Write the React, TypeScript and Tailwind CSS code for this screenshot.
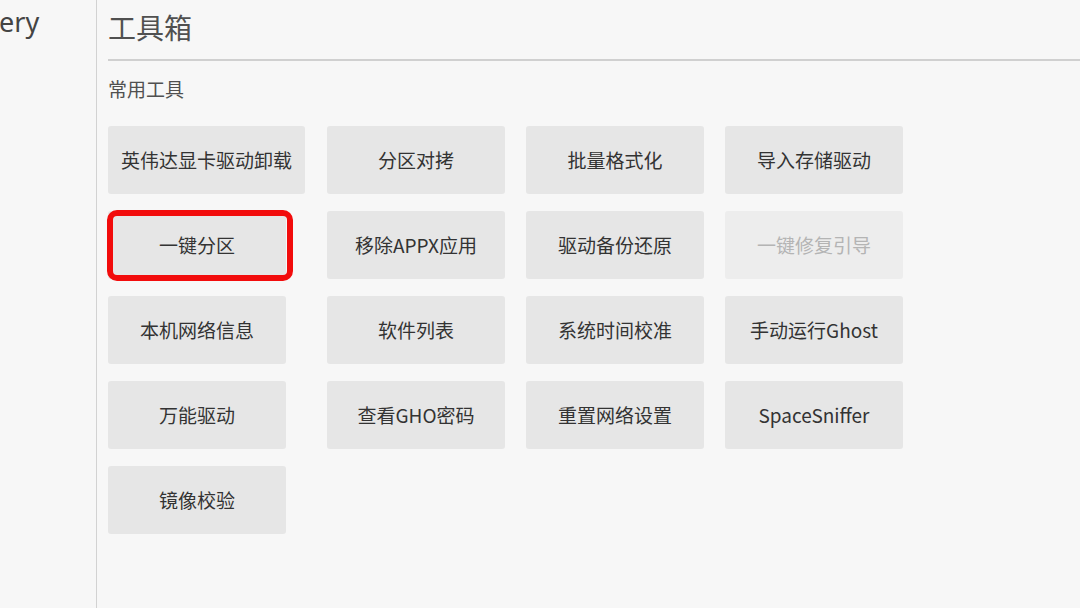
import React from "react";

type Item = { label: string; disabled?: boolean; marked?: boolean; wide?: boolean };

const items: Item[] = [
  { label: "英伟达显卡驱动卸载", wide: true },
  { label: "分区对拷" },
  { label: "批量格式化" },
  { label: "导入存储驱动" },
  { label: "一键分区", marked: true },
  { label: "移除APPX应用" },
  { label: "驱动备份还原" },
  { label: "一键修复引导", disabled: true },
  { label: "本机网络信息" },
  { label: "软件列表" },
  { label: "系统时间校准" },
  { label: "手动运行Ghost" },
  { label: "万能驱动" },
  { label: "查看GHO密码" },
  { label: "重置网络设置" },
  { label: "SpaceSniffer" },
  { label: "镜像校验" },
];

export default function App() {
  return (
    <div
      className="w-[1080px] h-[608px] flex bg-[#f7f7f7] overflow-hidden"
      style={{ fontFamily: '"Noto Sans CJK SC", "Noto Sans", sans-serif' }}
    >
      <aside className="w-[97px] shrink-0 border-r border-[#d2d2d2] h-full">
        <div
          className="text-[27px] leading-[27px] pt-[8px] text-[#444] -ml-[1px]"
          style={{ fontFamily: '"Noto Sans", "Open Sans", sans-serif' }}
        >
          ery
        </div>
      </aside>
      <main className="flex-1 pl-[11px]">
        <div className="pt-[14px] pb-[18px] border-b-[2px] border-[#d0d0d0]">
          <h1 className="text-[28px] leading-[27px] text-[#505050]">工具箱</h1>
        </div>
        <div className="pt-[19px] text-[19px] leading-[18px] text-[#505050]">常用工具</div>
        <div className="mt-[28px] grid grid-cols-[198px_178px_178px_178px] gap-x-[21px] gap-y-[17px]">
          {items.map((it) => (
            <div
              key={it.label}
              className={
                "relative h-[68px] rounded-[3px] flex items-center justify-center text-[19px] " +
                (it.wide ? "w-[197px] " : "w-[178px] ") +
                (it.disabled ? "bg-[#ededed] text-[#b4b4b4]" : "bg-[#e6e6e6] text-[#333333]")
              }
            >
              {it.label}
              {it.marked && (
                <span className="absolute -left-[1px] -top-[1px] w-[186px] h-[71px] border-[6px] border-[#f20c0c] rounded-[10px]" />
              )}
            </div>
          ))}
        </div>
      </main>
    </div>
  );
}
